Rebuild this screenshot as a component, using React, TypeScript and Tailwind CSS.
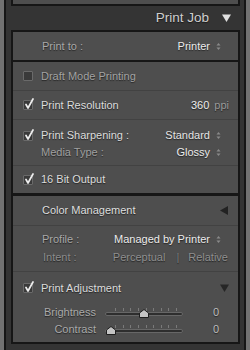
import React from 'react'

const font = { fontFamily: '"Liberation Sans", Arial, sans-serif' }

function Stepper() {
  return (
    <svg width="5" height="9" viewBox="0 0 5 9" className="ml-[6px] shrink-0">
      <path d="M0.5 3.5 L2.5 1 L4.5 3.5 Z" fill="#8a8a8a" />
      <path d="M0.5 5.5 L2.5 8 L4.5 5.5 Z" fill="#8a8a8a" />
    </svg>
  )
}

function Check({ on }: { on: boolean }) {
  return (
    <div className="relative w-[10px] h-[10px] shrink-0 bg-[#3a3a3a] border border-[#6a6a6a] rounded-[1px]">
      {on && (
        <svg width="12" height="13" viewBox="0 0 12 13" className="absolute left-[-1px] top-[-5px]">
          <path d="M3 8.5 L5 12 L10 3" stroke="#ededed" strokeWidth="1.7" fill="none" strokeLinecap="round" strokeLinejoin="round" />
        </svg>
      )}
    </div>
  )
}

function Sep() {
  return <div className="h-px bg-[#424242]" />
}

function Slider({ pos }: { pos: number }) {
  return (
    <div className="relative w-[78px] h-[17px] ml-[9px] shrink-0">
      <div className="absolute left-[10px] right-[6px] top-[4px] flex justify-between">
        {Array.from({ length: 9 }).map((_, i) => (
          <div key={i} className="w-px h-[3px] bg-[#7a7a7a]" />
        ))}
      </div>
      <div className="absolute left-0 right-0 top-[8px] h-[4px] rounded-full bg-[#2e2e2e] border border-[#676767]" />
      <svg width="10" height="9" viewBox="0 0 10 9" className="absolute top-[5px]" style={{ left: pos - 5 }}>
        <path d="M0.5 4 L5 0.5 L9.5 4 L9.5 8.5 L0.5 8.5 Z" fill="#c4c4c4" stroke="#1e1e1e" strokeWidth="1" />
      </svg>
    </div>
  )
}

export default function App() {
  return (
    <div style={font} className="w-[250px] h-[350px] bg-[#727272] px-[4px] overflow-hidden [text-shadow:0_1px_1px_rgba(0,0,0,0.55)] text-[11px]">
      <div className="h-full bg-[#343434] border-x-2 border-[#161616] pl-[5px] pr-[4px] flex flex-col">
        {/* previous panel edge */}
        <div className="h-[6px] bg-[#4e4e4e] border-x-2 border-b-2 border-[#161616]" />

        {/* header */}
        <div className="h-[24px] flex items-center justify-end pr-[9px]">
          <span className="text-[13.5px] text-[#cfcfcf]">Print Job</span>
          <svg width="9" height="8" viewBox="0 0 9 8" className="ml-[13px]">
            <path d="M0 0.5 L9 0.5 L4.5 8 Z" fill="#e0e0e0" />
          </svg>
        </div>

        {/* panel */}
        <div className="h-[314px] bg-[#4e4e4e] border-2 border-[#161616] flex flex-col">
          {/* print to */}
          <div className="h-[28px] flex items-center pl-[29px] pr-[17px]">
            <span className="text-[#a9a9a9]">Print to :</span>
            <span className="ml-auto text-[#ececec]">Printer</span>
            <Stepper />
          </div>
          <div className="h-[2px] bg-[#161616]" />

          {/* draft */}
          <div className="h-[28px] flex items-center pl-[10px]">
            <Check on={false} />
            <span className="ml-[8px] text-[#a3a3a3]">Draft Mode Printing</span>
          </div>
          <Sep />

          {/* resolution */}
          <div className="h-[28px] flex items-center pl-[10px] pr-[9px]">
            <Check on />
            <span className="ml-[8px] text-[#dcdcdc]">Print Resolution</span>
            <span className="ml-auto text-[#ececec]">360</span>
            <span className="ml-[5px] text-[#9a9a9a]">ppi</span>
          </div>
          <Sep />

          {/* sharpening */}
          <div className="h-[45px] pt-[7px] flex flex-col">
            <div className="h-[17px] flex items-center pl-[10px] pr-[17px]">
              <Check on />
              <span className="ml-[8px] text-[#dcdcdc]">Print Sharpening :</span>
              <span className="ml-auto text-[#e4e4e4]">Standard</span>
              <Stepper />
            </div>
            <div className="h-[17px] flex items-center pl-[28px] pr-[17px]">
              <span className="text-[#a0a0a0]">Media Type :</span>
              <span className="ml-auto text-[#ececec]">Glossy</span>
              <Stepper />
            </div>
          </div>
          <Sep />

          {/* 16 bit */}
          <div className="h-[27px] flex items-center pl-[10px]">
            <Check on />
            <span className="ml-[8px] text-[#dcdcdc]">16 Bit Output</span>
          </div>
          <div className="h-[3px] bg-[#161616]" />

          {/* color management */}
          <div className="h-[29px] flex items-center pl-[29px] pr-[10px]">
            <span className="text-[#dedede]">Color Management</span>
            <svg width="8" height="9" viewBox="0 0 8 9" className="ml-auto">
              <path d="M8 0 L8 9 L0 4.5 Z" fill="#222222" />
            </svg>
          </div>
          <Sep />

          <div className="h-[45px] pt-[4px] flex flex-col">
            <div className="h-[18px] flex items-center pl-[29px] pr-[17px]">
              <span className="text-[#a9a9a9]">Profile :</span>
              <span className="ml-auto text-[#ececec]">Managed by Printer</span>
              <Stepper />
            </div>
            <div className="h-[18px] flex items-center pl-[30px] pr-[10px]">
              <span className="text-[#8c8c8c]">Intent :</span>
              <span className="ml-auto text-[#8f8f8f]">Perceptual</span>
              <span className="ml-[11px] text-[#7e7e7e]">|</span>
              <span className="ml-[9px] text-[#8f8f8f]">Relative</span>
            </div>
          </div>
          <Sep />

          {/* print adjustment */}
          <div className="flex-1 flex flex-col">
            <div className="h-[32px] flex items-center pl-[10px] pr-[9px]">
              <Check on />
              <span className="ml-[8px] text-[#dcdcdc]">Print Adjustment</span>
              <svg width="9" height="8" viewBox="0 0 9 8" className="ml-auto">
                <path d="M0 0.5 L9 0.5 L4.5 8 Z" fill="#262626" />
              </svg>
            </div>
            <div className="h-[17px] flex items-center pr-[19px]">
              <span className="w-[83px] text-right text-[#a9a9a9]">Brightness</span>
              <Slider pos={39} />
              <span className="ml-auto text-[#bdbdbd]">0</span>
            </div>
            <div className="h-[17px] flex items-center pr-[19px]">
              <span className="w-[83px] text-right text-[#a9a9a9]">Contrast</span>
              <Slider pos={6} />
              <span className="ml-auto text-[#bdbdbd]">0</span>
            </div>
          </div>
        </div>
      </div>
    </div>
  )
}
